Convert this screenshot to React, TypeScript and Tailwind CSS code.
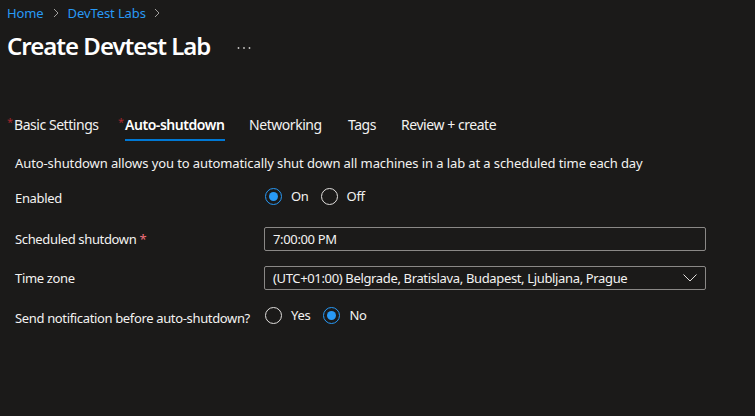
import React from "react";

const font = { fontFamily: '"Noto Sans", "Open Sans", sans-serif' };

function Chevron() {
  return (
    <svg width="6" height="10" viewBox="0 0 6 10" className="text-[#a19f9d]">
      <polyline points="1,1 5,5 1,9" fill="none" stroke="currentColor" strokeWidth="1" />
    </svg>
  );
}

function Radio({ checked, label, gapAfter }: { checked: boolean; label: string; gapAfter: string }) {
  return (
    <label className={`flex items-center ${gapAfter}`}>
      {checked ? (
        <span className="flex h-[17px] w-[17px] items-center justify-center rounded-full border border-[#2899f5]">
          <span className="h-[9px] w-[9px] rounded-full bg-[#2899f5]" />
        </span>
      ) : (
        <span className="h-[17px] w-[17px] rounded-full border border-[#e1dfdd]" />
      )}
      <span className="ml-[9px] text-[13px] leading-[18px] tracking-[-0.3px]">{label}</span>
    </label>
  );
}

const tabs = [
  { name: "Basic Settings", required: true, width: "w-[111px]" },
  { name: "Auto-shutdown", required: true, width: "w-[131px]", active: true },
  { name: "Networking", required: false, width: "w-[99px]" },
  { name: "Tags", required: false, width: "w-[53px]" },
  { name: "Review + create", required: false, width: "w-[120px]" },
];

export default function App() {
  return (
    <div className="h-[416px] w-[755px] overflow-hidden bg-[#1b1a19] text-[#f3f2f1]" style={font}>
      {/* breadcrumb */}
      <div className="mt-[5px] flex h-[16px] items-center px-[7px] text-[13px] leading-[16px] tracking-[-0.1px]">
        <span className="text-[#2899f5]">Home</span>
        <span className="mx-[9px] flex"><Chevron /></span>
        <span className="text-[#2899f5]">DevTest Labs</span>
        <span className="ml-[8px] flex"><Chevron /></span>
      </div>

      {/* title */}
      <div className="mt-[9px] flex h-[32px] items-center px-[7px]">
        <h1 className="text-[24px] font-semibold leading-[32px] tracking-[-1px] text-white">Create Devtest Lab</h1>
        <svg width="14" height="4" viewBox="0 0 14 4" className="ml-[27px] mt-[3px] text-[#c8c6c4]">
          <circle cx="1.5" cy="2" r="0.9" fill="currentColor" />
          <circle cx="7" cy="2" r="0.9" fill="currentColor" />
          <circle cx="12.5" cy="2" r="0.9" fill="currentColor" />
        </svg>
      </div>

      {/* tabs */}
      <div className="mt-[50px] flex px-[7px]">
        {tabs.map((t) => (
          <div key={t.name} className={`flex flex-col ${t.width}`}>
            <div className="flex h-[26px] items-center">
              {t.required && (
                <span className="mb-[7px] w-[7px] text-[11px] leading-[11px] text-[#a4262c]">*</span>
              )}
              <span
                className={`text-[14px] leading-[26px] ${
                  t.active ? "font-semibold tracking-[-0.45px] text-white" : "tracking-[-0.45px] text-[#f3f2f1]"
                }`}
              >
                {t.name}
              </span>
            </div>
            {t.active ? (
              <div className="ml-[7px] mt-[1px] h-[2px] w-[100px] bg-[#0078d4]" />
            ) : (
              <div className="mt-[1px] h-[2px]" />
            )}
          </div>
        ))}
      </div>

      {/* form */}
      <div className="px-[15px] text-[13px] leading-[18px]">
        <p className="mt-[13px] tracking-[-0.1px]">
          Auto-shutdown allows you to automatically shut down all machines in a lab at a scheduled time each day
        </p>

        <div className="mt-[12px] flex h-[24px] items-center tracking-[-0.35px]">
          <div className="w-[249px] pt-[4px]">Enabled</div>
          <div className="flex pl-[1px]">
            <Radio checked label="On" gapAfter="mr-[12px]" />
            <Radio checked={false} label="Off" gapAfter="" />
          </div>
        </div>

        <div className="mt-[19px] flex h-[24px] items-center tracking-[-0.35px]">
          <div className="w-[249px]">
            Scheduled shutdown <span className="text-[#f1707b]">*</span>
          </div>
          <div className="flex h-[24px] w-[442px] items-center rounded-[2px] border border-[#8a8886] px-[8px]">
            7:00:00 PM
          </div>
        </div>

        <div className="mt-[15px] flex h-[24px] items-center tracking-[-0.35px]">
          <div className="w-[249px]">Time zone</div>
          <div className="flex h-[24px] w-[442px] items-center justify-between rounded-[2px] border border-[#8a8886] px-[8px]">
            <span>(UTC+01:00) Belgrade, Bratislava, Budapest, Ljubljana, Prague</span>
            <svg width="14" height="8" viewBox="0 0 14 8" className="text-[#e1dfdd]">
              <polyline points="0.5,0.5 7,7 13.5,0.5" fill="none" stroke="currentColor" strokeWidth="1" />
            </svg>
          </div>
        </div>

        <div className="mt-[13px] flex h-[24px] items-center tracking-[-0.35px]">
          <div className="w-[249px] pt-[5px]">Send notification before auto-shutdown?</div>
          <div className="flex pl-[1px]">
            <Radio checked={false} label="Yes" gapAfter="mr-[13px]" />
            <Radio checked label="No" gapAfter="" />
          </div>
        </div>
      </div>
    </div>
  );
}
